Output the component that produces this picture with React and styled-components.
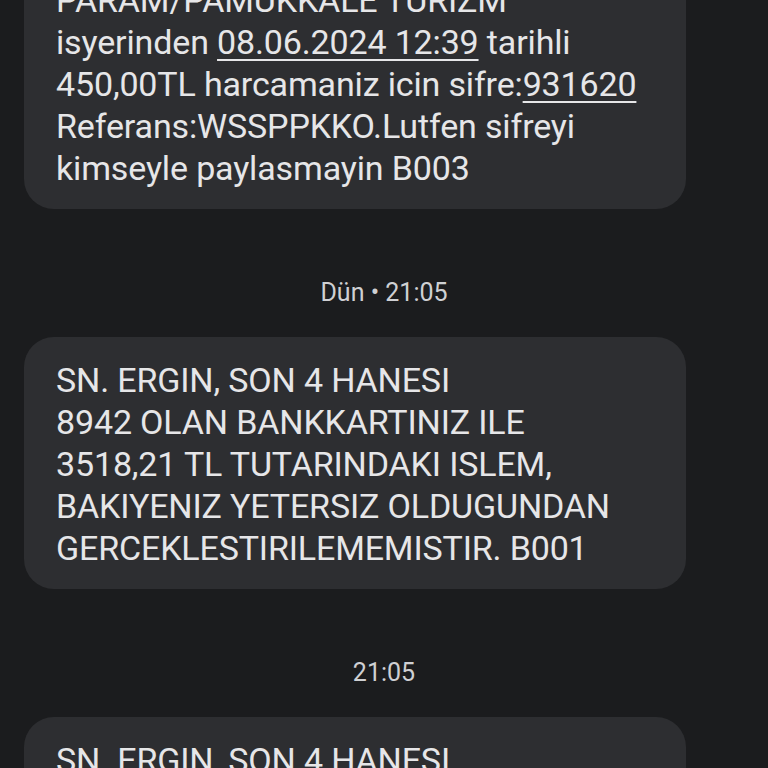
import React from "react";
import styled, { createGlobalStyle } from "styled-components";

const Global = createGlobalStyle`
  html, body { margin: 0; padding: 0; background: #1b1c1e; }
  body { font-family: Roboto, "Noto Sans", sans-serif; overflow: hidden; }
`;

const Thread = styled.div`
  display: flex;
  flex-direction: column;
  align-items: stretch;
  padding: 0 82px 0 24px;
  height: 768px;
  overflow: hidden;
`;

const Bubble = styled.div`
  flex: none;
  background: #2d2e31;
  border-radius: 30px;
  padding: 22px 20px 20px 32px;
  margin-top: ${(p) => p.$offset ?? 0}px;
  color: #e6e6e8;
  font-size: 34px;
  line-height: 42px;
  letter-spacing: -0.15px;
`;

const Line = styled.div`
  white-space: nowrap;
`;

const Link = styled.span`
  text-decoration: underline;
  text-decoration-thickness: 2px;
  text-underline-offset: 5px;
`;

const Stamp = styled.div`
  flex: none;
  text-align: center;
  color: #cfd0d3;
  font-size: 25px;
  line-height: 28px;
  margin: 70px 0 30px;
  padding-left: 58px;
`;

export default function App() {
  return (
    <>
      <Global />
      <Thread>
        <Bubble $offset={-43}>
          <Line>PARAM/PAMUKKALE TURIZM</Line>
          <Line>
            isyerinden <Link>08.06.2024 12:39</Link> tarihli
          </Line>
          <Line>
            450,00TL harcamaniz icin sifre:<Link>931620</Link>
          </Line>
          <Line>Referans:WSSPPKKO.Lutfen sifreyi</Line>
          <Line>kimseyle paylasmayin B003</Line>
        </Bubble>
        <Stamp>Dün • 21:05</Stamp>
        <Bubble>
          <Line>SN. ERGIN, SON 4 HANESI</Line>
          <Line>8942 OLAN BANKKARTINIZ ILE</Line>
          <Line>3518,21 TL TUTARINDAKI ISLEM,</Line>
          <Line>BAKIYENIZ YETERSIZ OLDUGUNDAN</Line>
          <Line>GERCEKLESTIRILEMEMISTIR. B001</Line>
        </Bubble>
        <Stamp>21:05</Stamp>
        <Bubble>
          <Line>SN. ERGIN, SON 4 HANESI</Line>
          <Line>8942 OLAN BANKKARTINIZ ILE</Line>
        </Bubble>
      </Thread>
    </>
  );
}
